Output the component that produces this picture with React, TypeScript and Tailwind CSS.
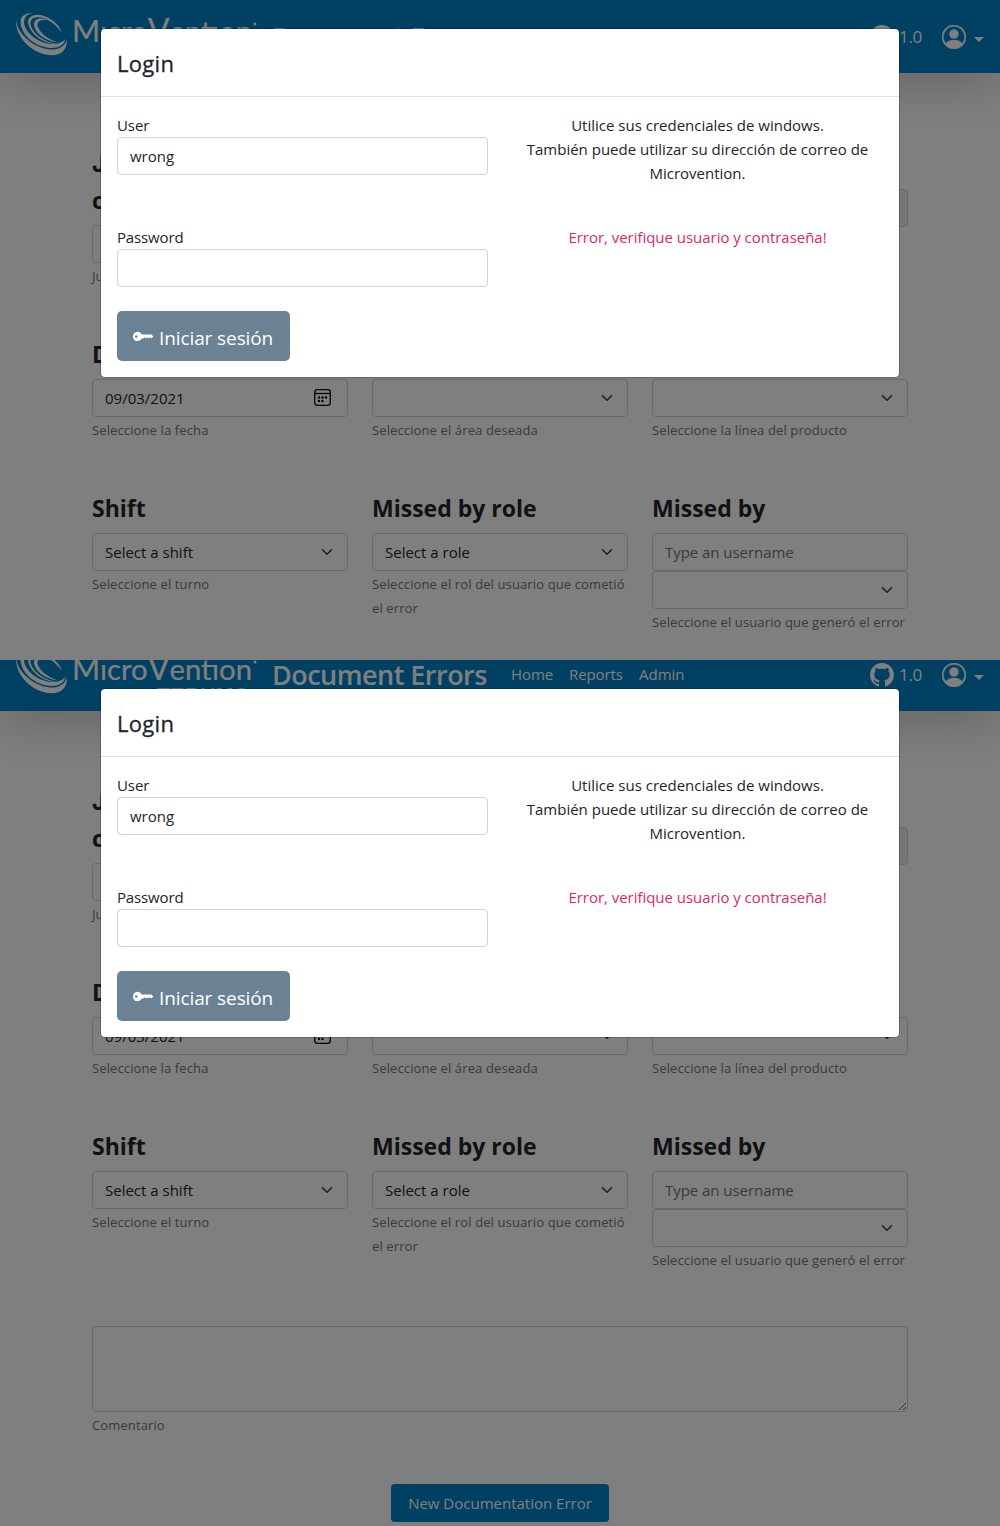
import React from 'react';
import { BsGithub, BsKeyFill, BsPersonCircle } from 'react-icons/bs';

function Logo() {
  return (
    <svg width="242" height="56" viewBox="0 0 242 56" className="block shrink-0 overflow-visible" fill="#fff">
      <path d="M0 7 C-1 22 14 41 35 42.300 C44 42.500 51 38 51 27 C48 34 42 37 34 36.500 C18 35 2 22 0 7 Z" />
      <path d="M17 0 C9 0 4.500 3 4.500 9 C5 21 18 34 35 35 C43 35 48 32 49.500 26 C46 30 41 31.500 34 31 C20 29 8 18 8 9 C8 4 11 1 17 0 Z" />
      <path d="M12 9 C12 3 20 0 28 3 C37 6 44 13 46 20 C40 12 33 6 25 4.500 C18 3.500 14 6 14.500 11 C16 20 27 29 43 31.500 C26 31 13 20 12 9 Z" />
      <path d="M18 12 C18 6 23 4 31 7 C25 6.500 21 8 21.500 12.500 C23 19 31 26 42 29.500 C29 28 19 20 18 12 Z" />
      <g stroke="#fff" strokeWidth="0.200">
        <text x="56" y="29" textLength="180" lengthAdjust="spacingAndGlyphs" fontFamily="Lato" fontSize="29">
          <tspan fontSize="30">M</tspan>ıcro<tspan fontSize="32">V</tspan>entıon
        </text>
      </g>
      <circle cx="239" cy="11" r="1.500" />
      <text x="141" y="50" textLength="93" lengthAdjust="spacingAndGlyphs" fontFamily="Liberation Sans" fontWeight="700" fontSize="19">
        TERUMO
      </text>
    </svg>
  );
}

function Navbar() {
  return (
    <header className="flex h-[73px] items-start bg-[#0080c4] px-4 text-white shadow-[0_16px_48px_rgba(0,0,0,0.175)]">
      <div className="mt-[13px]">
        <Logo />
      </div>
      <div className="ml-[14px] mt-[17px] w-[217px] whitespace-nowrap text-[27px] font-semibold leading-10 tracking-[-0.52px]">Document Errors</div>
      <nav className="ml-[22px] mt-6 flex gap-4 whitespace-nowrap text-[15px] leading-6">
        <span className="w-[42px] tracking-[-0.1px]">Home</span>
        <span className="w-[54px] tracking-[-0.1px]">Reports</span>
        <span>Admin</span>
      </nav>
      <div className="ml-auto mt-[25px] flex items-center">
        <BsGithub className="size-6" />
        <span className="ml-[5px] w-[23px] text-[17px] leading-6 tracking-[-0.3px]">1.0</span>
        <BsPersonCircle className="ml-5 size-6" stroke="currentColor" strokeWidth="0.250" />
        <span className="ml-2 mt-1 size-0 border-x-[5px] border-t-[5px] border-x-transparent border-t-white" />
      </div>
    </header>
  );
}

function Chevron() {
  return (
    <svg viewBox="0 0 16 16" className="size-3 overflow-visible" fill="none" stroke="#343a40" strokeWidth="2" strokeLinecap="round" strokeLinejoin="round">
      <path d="M2 5l6 6 6-6" />
    </svg>
  );
}

function CalendarIcon() {
  return (
    <svg viewBox="0 0 17 17" className="mb-px size-[17px]" fill="none" stroke="#000" strokeWidth="1.300">
      <rect x="0.700" y="0.700" width="15.600" height="15.600" rx="2.500" />
      <path d="M1 4.500h15" />
      <g fill="#000" stroke="none">
        <circle cx="5" cy="8.500" r="1.200" />
        <circle cx="8.500" cy="8.500" r="1.200" />
        <circle cx="12" cy="8.500" r="1.200" />
        <circle cx="5" cy="12" r="1.200" />
        <circle cx="8.500" cy="12" r="1.200" />
      </g>
    </svg>
  );
}

function Box({ text, icon, muted, disabled }: { text?: string; icon?: React.ReactNode; muted?: boolean; disabled?: boolean }) {
  return (
    <div className={`flex h-[38px] items-center justify-between rounded border border-[#ced4da] pl-3 pr-[14px] text-[15px] ${disabled ? 'bg-[#e9ecef]' : 'bg-white'} ${muted ? 'text-[#6c757d] tracking-[-0.05px]' : 'text-[#212529]'}`}>
      <span>{text}</span>
      {icon}
    </div>
  );
}

function Field({ title, help, children }: { title: React.ReactNode; help?: string; children: React.ReactNode }) {
  return (
    <div>
      <h2 className="mb-[6px] text-[23px] font-bold leading-[37px]">{title}</h2>
      {children}
      {help && <p className="mt-px text-[13px] leading-6 tracking-[0.12px] text-[#6c757d]">{help}</p>}
    </div>
  );
}

function ErrorForm() {
  return (
    <main className="mx-[92px] pt-[72px]">
      <div className="grid grid-cols-3 gap-x-6 gap-y-12">
        <Field
          title={
            <>
              <span className="block h-[37px] pt-px font-['Inter',sans-serif]">J</span>
              <span className="block h-[37px]">c</span>
            </>
          }
          help="Ju"
        >
          <Box />
        </Field>
        <div />
        <div className="pt-11">
          <Box disabled />
        </div>
        <Field title="D" help="Seleccione la fecha">
          <Box text="09/03/2021" icon={<span className="mr-[2px]"><CalendarIcon /></span>} />
        </Field>
        <Field title={'\u00a0'} help="Seleccione el área deseada">
          <Box icon={<Chevron />} />
        </Field>
        <Field title={'\u00a0'} help="Seleccione la línea del producto">
          <Box icon={<Chevron />} />
        </Field>
        <Field title="Shift" help="Seleccione el turno">
          <Box text="Select a shift" icon={<Chevron />} />
        </Field>
        <Field title="Missed by role" help="Seleccione el rol del usuario que cometió el error">
          <Box text="Select a role" icon={<Chevron />} />
        </Field>
        <Field title="Missed by" help="Seleccione el usuario que generó el error">
          <Box text="Type an username" muted />
          <Box icon={<Chevron />} />
        </Field>
      </div>
      <textarea className="mt-[54px] block h-[86px] w-full rounded border border-[#ced4da] bg-white" />
      <p className="mt-px text-[13px] leading-6 tracking-[0.12px] text-[#6c757d]">Comentario</p>
      <div className="mt-[47px] flex justify-center">
        <button className="h-[38px] w-[218px] whitespace-nowrap rounded bg-[#0080c4] text-[15px] text-white">New Documentation Error</button>
      </div>
    </main>
  );
}

function LoginDialog() {
  return (
    <div className="absolute inset-0 flex items-start justify-center bg-black/50 pt-7">
      <section className="h-[350px] w-[800px] rounded-[5px] border border-black/20 bg-white bg-clip-padding">
        <h1 className="h-[68px] border-b border-[#dee2e6] pl-4 pt-[19px] text-[22px] font-medium leading-[30px] tracking-[0.3px] [-webkit-text-stroke:0.3px_#212529]">Login</h1>
        <div className="grid grid-cols-2 gap-x-6 px-4 pt-4 text-[15px] leading-6">
          <div>
            <label className="block tracking-[-0.1px]">User</label>
            <Box text="wrong" />
          </div>
          <div className="text-center">
            <p>Utilice sus credenciales de windows.</p>
            <p>También puede utilizar su dirección de correo de Microvention.</p>
          </div>
          <div className="mt-10">
            <label className="block tracking-[-0.15px]">Password</label>
            <Box />
          </div>
          <p className="mt-10 text-center tracking-[-0.03px] text-[#e3256b]">Error, verifique usuario y contraseña!</p>
          <button className="mt-6 flex h-[50px] w-[173px] items-center whitespace-nowrap rounded-[5px] bg-[#6b8294] pl-4 text-[19px] tracking-[-0.1px] text-white">
            <BsKeyFill className="size-[21px]" />
            <span className="ml-[5px] mt-1">Iniciar sesión</span>
          </button>
        </div>
      </section>
    </div>
  );
}

export default function App() {
  return (
    <div className="w-[1000px] bg-white font-['Open_Sans',sans-serif] text-[#212529]">
      <div className="relative h-[660px] overflow-hidden">
        <Navbar />
        <ErrorForm />
        <LoginDialog />
      </div>
      <div className="relative h-[866px] overflow-hidden">
        <div className="-mt-[22px]">
          <Navbar />
          <ErrorForm />
        </div>
        <LoginDialog />
      </div>
    </div>
  );
}
